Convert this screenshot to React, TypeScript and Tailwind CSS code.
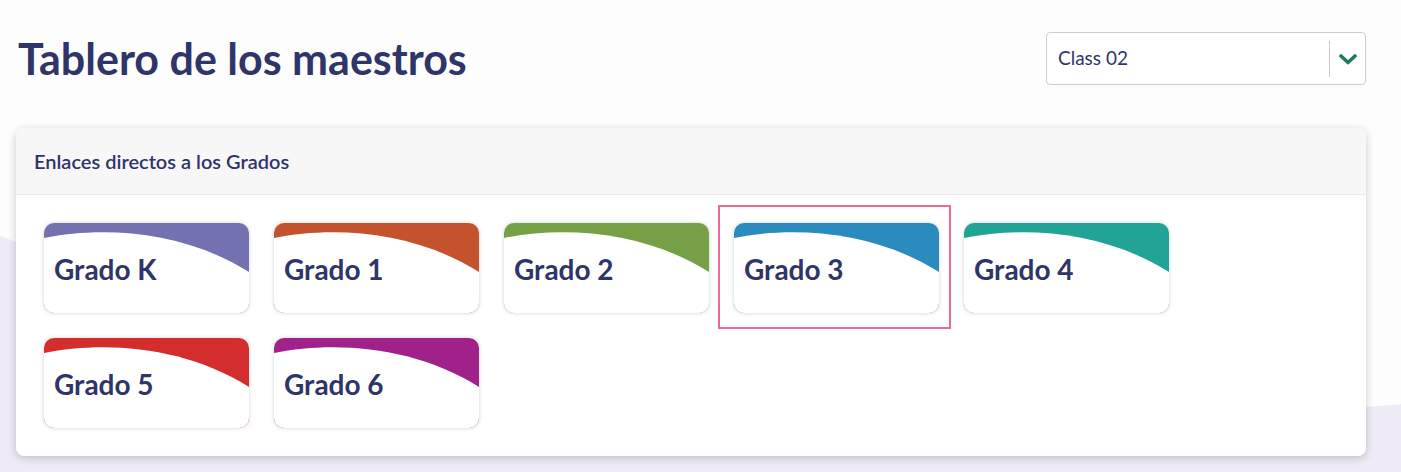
const grades = [
  { label: 'Grado K', color: '#7471b1' },
  { label: 'Grado 1', color: '#c4522d' },
  { label: 'Grado 2', color: '#76a046' },
  { label: 'Grado 3', color: '#2a8bbf', focused: true },
  { label: 'Grado 4', color: '#21a396' },
  { label: 'Grado 5', color: '#d32d2d' },
  { label: 'Grado 6', color: '#a0218a' },
];

function GradeTile({ label, color, focused }: { label: string; color: string; focused?: boolean }) {
  return (
    <a href="#" className="relative block w-[205px] h-[90px]">
      <div className="relative w-full h-full rounded-[10px] overflow-hidden bg-white shadow-[0_0_4px_rgba(0,0,0,0.18)]">
        <svg className="absolute inset-0" width="205" height="90" viewBox="0 0 205 90">
          <rect width="205" height="90" fill={color} />
          <path d="M0 15 C60 3 140 8 205 49 L205 90 L0 90 Z" fill="#fff" />
        </svg>
        <span className="absolute left-[10px] top-[32px] text-[28px] font-bold leading-none text-[#2f3469]">
          {label}
        </span>
      </div>
      {focused && (
        <div className="absolute -left-4 -top-[18px] -right-3 -bottom-4 border-2 border-[#f0679a] pointer-events-none" />
      )}
    </a>
  );
}

export default function App() {
  return (
    <div className="relative w-full h-[472px] overflow-hidden bg-[#fdfdfd] font-['Lato','Noto_Sans',sans-serif]">
      {/* background wave */}
      <svg className="absolute inset-0" width="1401" height="472" viewBox="0 0 1401 472" preserveAspectRatio="none">
        <path d="M0 236 C500 420 1000 440 1401 404 L1401 472 L0 472 Z" fill="#eeebf6" />
      </svg>

      <div className="relative pl-4 pr-[35px] pt-8">
        <div className="flex items-center justify-between">
          <h1 className="pl-[2px] text-[43px] font-bold leading-none text-[#2f3469]">
            Tablero de los maestros
          </h1>
          <div className="flex items-center w-[320px] h-[53px] bg-white border border-[#cccccc] rounded-[4px]">
            <span className="flex-1 pl-[11px] text-[19px] text-[#2f3469]">Class 02</span>
            <div className="w-px h-[36px] bg-[#cccccc]" />
            <div className="flex items-center justify-center w-[35px]">
              <svg width="18" height="12" viewBox="0 0 18 12">
                <polyline points="2,3 9,9.5 16,3" fill="none" stroke="#1f7a5c" strokeWidth="3.6" strokeLinecap="round" strokeLinejoin="round" />
              </svg>
            </div>
          </div>
        </div>

        <div className="mt-[43px] bg-white rounded-[8px] shadow-[0_2px_8px_rgba(0,0,0,0.2)] overflow-hidden">
          <div className="h-[67px] flex items-center px-[18px] bg-[#f7f7f7] border-b border-[#ebebeb]">
            <span className="text-[20px] font-semibold text-[#2f3469]">Enlaces directos a los Grados</span>
          </div>
          <div className="flex flex-wrap gap-[25px] p-7">
            {grades.map((g) => (
              <GradeTile key={g.label} {...g} />
            ))}
          </div>
        </div>
      </div>
    </div>
  );
}
